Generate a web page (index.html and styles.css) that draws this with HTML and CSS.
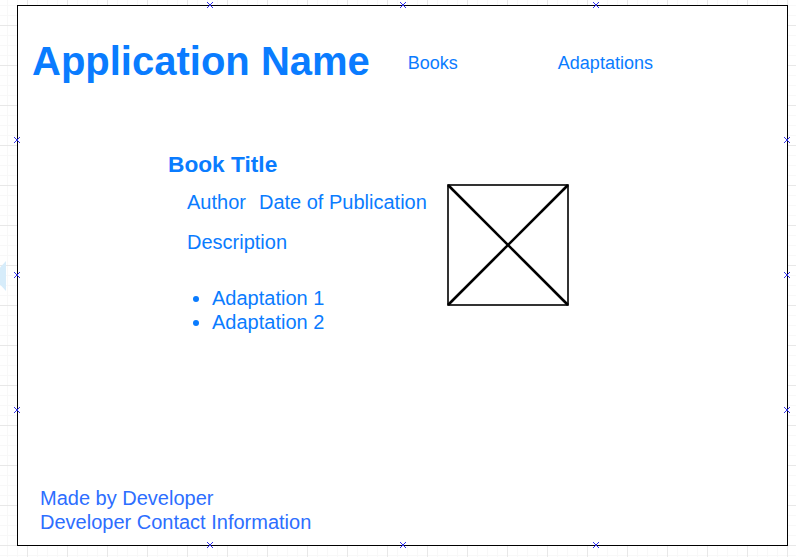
FILE: index.html
```html
<!DOCTYPE html>
<html lang="en">
<head>
<meta charset="utf-8">
<title>Application Name</title>
<link rel="stylesheet" href="styles.css">
</head>
<body>
<div class="stage">
  <svg class="hover-arrow" width="8" height="30" viewBox="0 0 8 30"><polygon points="6,0 6,30 -8,15" fill="#d6ecfa"/></svg>
  <div class="frame">
    <header class="header">
      <h1 class="app-name">Application Name</h1>
      <nav class="nav">
        <a class="nav-link nav-books">Books</a>
        <a class="nav-link">Adaptations</a>
      </nav>
    </header>
    <main class="content">
      <section class="details">
        <h2 class="book-title">Book Title</h2>
        <div class="info">
          <div class="meta"><span>Author</span><span>Date of Publication</span></div>
          <p class="description">Description</p>
          <ul class="adaptations">
            <li>Adaptation 1</li>
            <li>Adaptation 2</li>
          </ul>
        </div>
      </section>
      <svg class="placeholder" width="122" height="122" viewBox="0 0 122 122">
        <rect x="1" y="1" width="120" height="120" fill="#fff" stroke="#000" stroke-width="1.6"/>
        <line x1="1" y1="1" x2="121" y2="121" stroke="#000" stroke-width="2.6"/>
        <line x1="121" y1="1" x2="1" y2="121" stroke="#000" stroke-width="2.6"/>
      </svg>
    </main>
    <footer class="footer">
      <div>Made by Developer</div>
      <div>Developer Contact Information</div>
    </footer>
    <span class="handle h-t1"></span><span class="handle h-t2"></span><span class="handle h-t3"></span>
    <span class="handle h-b1"></span><span class="handle h-b2"></span><span class="handle h-b3"></span>
    <span class="handle h-l1"></span><span class="handle h-l2"></span><span class="handle h-l3"></span>
    <span class="handle h-r1"></span><span class="handle h-r2"></span><span class="handle h-r3"></span>
  </div>
</div>
</body>
</html>
```

FILE: styles.css
```css
* { box-sizing: border-box; }

html, body {
  margin: 0;
  width: 796px;
  height: 557px;
  overflow: hidden;
}

body {
  font-family: "Liberation Sans", Arial, Helvetica, sans-serif;
  background-color: #ffffff;
  background-image:
    linear-gradient(#e8e8e8 1px, transparent 1px),
    linear-gradient(90deg, #e8e8e8 1px, transparent 1px),
    linear-gradient(#f8f8f8 1px, transparent 1px),
    linear-gradient(90deg, #f8f8f8 1px, transparent 1px);
  background-size: 40px 40px, 40px 40px, 10px 10px, 10px 10px;
  background-position: 0 25px, 27px 0, 0 5px, 7px 0;
}

.stage {
  position: relative;
  padding: 5px 0 0 17px;
}

.hover-arrow {
  position: absolute;
  left: 0;
  top: 261px;
}

.frame {
  position: relative;
  width: 771px;
  height: 541px;
  border: 1px solid #000;
  background: #fff;
  display: flex;
  flex-direction: column;
  color: #0a7cff;
}

.header {
  display: flex;
  align-items: flex-start;
  padding: 31px 0 0 14px;
}

.app-name {
  margin: 0;
  font-size: 40px;
  line-height: 48px;
  font-weight: bold;
  white-space: nowrap;
}

.nav {
  display: flex;
  margin: 15px 0 0 38px;
}

.nav-link {
  font-size: 18px;
  line-height: 22px;
  color: #0a7cff;
}

.nav-books {
  width: 150px;
}

.content {
  display: flex;
  align-items: flex-start;
  margin: 66px 0 0 150px;
}

.details {
  width: 279px;
}

.book-title {
  margin: 0;
  font-size: 22.7px;
  line-height: 26px;
  font-weight: bold;
  white-space: nowrap;
}

.info {
  padding-left: 19px;
  font-size: 20px;
  line-height: 24px;
}

.meta {
  display: flex;
  gap: 13px;
  margin-top: 13px;
  white-space: nowrap;
}

.description {
  margin: 16px 0 0;
}

.adaptations {
  margin: 32px 0 0;
  padding-left: 25px;
}

.placeholder {
  display: block;
  margin-top: 33px;
}

.footer {
  margin-top: auto;
  padding: 0 0 11px 22px;
  font-size: 20px;
  line-height: 24px;
  color: #2d6eff;
}

.handle {
  position: absolute;
  width: 6px;
  height: 6px;
  background:
    linear-gradient(45deg, transparent 43%, #3030e8 43%, #3030e8 57%, transparent 57%),
    linear-gradient(-45deg, transparent 43%, #3030e8 43%, #3030e8 57%, transparent 57%);
}

.h-t1 { left: 189px; top: -4px; }
.h-t2 { left: 382px; top: -4px; }
.h-t3 { left: 575px; top: -4px; }
.h-b1 { left: 189px; top: 536px; }
.h-b2 { left: 382px; top: 536px; }
.h-b3 { left: 575px; top: 536px; }
.h-l1 { left: -4px; top: 131px; }
.h-l2 { left: -4px; top: 266px; }
.h-l3 { left: -4px; top: 401px; }
.h-r1 { left: 766px; top: 131px; }
.h-r2 { left: 766px; top: 266px; }
.h-r3 { left: 766px; top: 401px; }
```
